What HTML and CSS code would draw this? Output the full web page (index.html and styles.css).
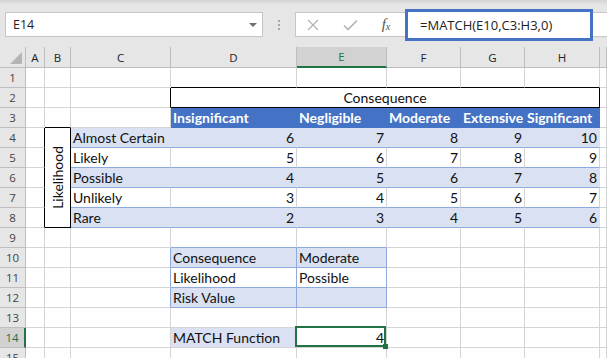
FILE: index.html
```html
<!DOCTYPE html>
<html lang="en">
<head>
    <meta charset="UTF-8">
    <meta name="viewport" content="width=device-width, initial-scale=1.0">
    <title>MATCH Function</title>
    <link rel="stylesheet" href="styles.css">
</head>
<body>
    <div class="toolbar">
        <div class="namebox">
            <span>E14</span>
            <span class="caret"></span>
        </div>
        <div class="grip"><i></i><i></i><i></i></div>
        <div class="formula">
            <span class="fb-icon fb-x">
                <svg width="12" height="12" viewBox="0 0 12 12"><path d="M1 1L11 11M11 1L1 11" stroke="#b3b3b3" stroke-width="1.3" fill="none"/></svg>
            </span>
            <span class="fb-icon fb-ok">
                <svg width="15" height="12" viewBox="0 0 15 12"><path d="M1 6.5L5 10.5L14 1.5" stroke="#b3b3b3" stroke-width="1.6" fill="none"/></svg>
            </span>
            <span class="fx">f<sub>x</sub></span>
            <div class="formula-text">=MATCH(E10,C3:H3,0)</div>
        </div>
    </div>

    <div class="sheet">
        <div class="corner"><span class="tri"></span></div>
        <div class="ch">A</div><div class="ch">B</div><div class="ch">C</div><div class="ch">D</div>
        <div class="ch sel">E</div><div class="ch">F</div><div class="ch">G</div><div class="ch">H</div><div class="ch"></div>

        <div class="rh">1</div>
        <div class="c"></div><div class="c"></div><div class="c"></div>
        <div class="c bk-b"></div><div class="c bk-b"></div><div class="c bk-b"></div><div class="c bk-b"></div><div class="c bk-b"></div><div class="c"></div>

        <div class="rh">2</div>
        <div class="c"></div><div class="c"></div><div class="c bk-r"></div>
        <div class="c box title">Consequence</div>
        <div class="c"></div>

        <div class="rh">3</div>
        <div class="c"></div><div class="c bk-b"></div><div class="c"></div>
        <div class="c hdr">Insignificant</div><div class="c hdr">Negligible</div><div class="c hdr">Moderate</div><div class="c hdr">Extensive</div><div class="c hdr">Significant</div>
        <div class="c"></div>

        <div class="rh">4</div>
        <div class="c bk-r"></div>
        <div class="c box side"><span>Likelihood</span></div>
        <div class="c band">Almost Certain</div>
        <div class="c band num">6</div><div class="c band num">7</div><div class="c band num">8</div><div class="c band num">9</div><div class="c band num">10</div>
        <div class="c"></div>

        <div class="rh">5</div>
        <div class="c bk-r"></div>
        <div class="c row">Likely</div>
        <div class="c row num">5</div><div class="c row num">6</div><div class="c row num">7</div><div class="c row num">8</div><div class="c row num">9</div>
        <div class="c"></div>

        <div class="rh">6</div>
        <div class="c bk-r"></div>
        <div class="c band">Possible</div>
        <div class="c band num">4</div><div class="c band num">5</div><div class="c band num">6</div><div class="c band num">7</div><div class="c band num">8</div>
        <div class="c"></div>

        <div class="rh">7</div>
        <div class="c bk-r"></div>
        <div class="c row">Unlikely</div>
        <div class="c row num">3</div><div class="c row num">4</div><div class="c row num">5</div><div class="c row num">6</div><div class="c row num">7</div>
        <div class="c"></div>

        <div class="rh">8</div>
        <div class="c bk-r"></div>
        <div class="c band">Rare</div>
        <div class="c band num">2</div><div class="c band num">3</div><div class="c band num">4</div><div class="c band num">5</div><div class="c band num">6</div>
        <div class="c"></div>

        <div class="rh">9</div>
        <div class="c"></div><div class="c"></div><div class="c"></div>
        <div class="c lb-b"></div><div class="c lb-b"></div><div class="c"></div><div class="c"></div><div class="c"></div><div class="c"></div>

        <div class="rh">10</div>
        <div class="c"></div><div class="c"></div><div class="c lb-r"></div>
        <div class="c tb band">Consequence</div><div class="c tb band">Moderate</div>
        <div class="c"></div><div class="c"></div><div class="c"></div><div class="c"></div>

        <div class="rh">11</div>
        <div class="c"></div><div class="c"></div><div class="c lb-r"></div>
        <div class="c tb">Likelihood</div><div class="c tb">Possible</div>
        <div class="c"></div><div class="c"></div><div class="c"></div><div class="c"></div>

        <div class="rh">12</div>
        <div class="c"></div><div class="c"></div><div class="c lb-r"></div>
        <div class="c tb band">Risk Value</div><div class="c tb band"></div>
        <div class="c"></div><div class="c"></div><div class="c"></div><div class="c"></div>

        <div class="rh">13</div>
        <div class="c"></div><div class="c"></div><div class="c"></div><div class="c"></div>
        <div class="c"></div><div class="c"></div><div class="c"></div><div class="c"></div><div class="c"></div>

        <div class="rh sel">14</div>
        <div class="c"></div><div class="c"></div><div class="c"></div>
        <div class="c fill">MATCH Function</div>
        <div class="c num active">4<span class="handle"></span></div>
        <div class="c"></div><div class="c"></div><div class="c"></div><div class="c"></div>

        <div class="rh">15</div>
        <div class="c"></div><div class="c"></div><div class="c"></div><div class="c"></div>
        <div class="c"></div><div class="c"></div><div class="c"></div><div class="c"></div><div class="c"></div>
    </div>
</body>
</html>
```

FILE: styles.css
```css
body {
    margin: 0;
    overflow: hidden;
    background: #fff;
    font-family: "Open Sans", "Noto Sans", sans-serif;
}

/* formula bar strip */
.toolbar {
    height: 47px;
    box-sizing: border-box;
    padding-top: 12px;
    display: flex;
    align-items: flex-start;
    background: linear-gradient(#d4d4d4, #e6e6e6 5px);
}
.namebox {
    margin-left: 5px;
    width: 258px;
    height: 25px;
    box-sizing: border-box;
    border: 1px solid #c6c6c6;
    background: #fff;
    display: flex;
    align-items: center;
    justify-content: space-between;
    padding: 0 5px 0 7px;
    font-size: 12.5px;
    color: #222;
}
.caret {
    width: 0;
    height: 0;
    border-left: 4px solid transparent;
    border-right: 4px solid transparent;
    border-top: 4px solid #6e6e6e;
}
.grip {
    width: 32px;
    height: 25px;
    display: flex;
    flex-direction: column;
    align-items: center;
    justify-content: center;
    gap: 2px;
}
.grip i {
    width: 2px;
    height: 2px;
    background: #a8a8a8;
}
.formula {
    flex: 1;
    height: 25px;
    box-sizing: border-box;
    border: 1px solid #c6c6c6;
    border-right: none;
    background: #fff;
    display: flex;
    align-items: center;
}
.fb-icon {
    display: flex;
    justify-content: center;
}
.fb-x {
    width: 33px;
}
.fb-ok {
    width: 42px;
}
.fx {
    width: 30px;
    text-align: center;
    font-family: "Liberation Serif", serif;
    font-style: italic;
    font-size: 15px;
    color: #555;
}
.fx sub {
    font-size: 10px;
    vertical-align: -1px;
}
.formula-text {
    align-self: center;
    margin-left: 4px;
    width: 188px;
    height: 32px;
    box-sizing: border-box;
    border: 3px solid #4472c4;
    background: #fff;
    padding-left: 12px;
    display: flex;
    align-items: center;
    font-size: 13px;
    color: #222;
}

/* grid */
.sheet {
    display: grid;
    grid-template-columns: 26px 19px 26px 100px 126px 90px 74px 64px 75px 1fr;
    grid-template-rows: 21px repeat(15, 20px);
    font-family: Lato, "Open Sans", sans-serif;
    font-size: 14px;
    color: #111;
}
.corner, .ch, .rh {
    background: #e6e6e6;
    box-sizing: border-box;
    border-right: 1px solid #bdbdbd;
    border-bottom: 1px solid #bdbdbd;
    font-family: "Open Sans", sans-serif;
    font-size: 11.5px;
    color: #222;
    display: flex;
    align-items: center;
    justify-content: center;
}
.corner {
    position: relative;
}
.tri {
    position: absolute;
    right: 3px;
    bottom: 3px;
    width: 0;
    height: 0;
    border-left: 12px solid transparent;
    border-bottom: 12px solid #b5b5b5;
}
.ch.sel {
    background: #d2d2d2;
    border-bottom: 2px solid #217346;
    color: #217346;
}
.rh {
    color: #444;
}
.rh.sel {
    background: #d2d2d2;
    border-right: 2px solid #217346;
    color: #217346;
}
.c {
    box-sizing: border-box;
    border-right: 1px solid #d4d4d4;
    border-bottom: 1px solid #d4d4d4;
    padding: 0 2px;
    line-height: 19px;
    white-space: nowrap;
    display: flex;
}
.num {
    justify-content: flex-end;
}
.bk-b {
    border-bottom-color: #000;
}
.bk-r {
    border-right-color: #000;
}
.box {
    border-right-color: #000;
    border-bottom-color: #000;
}
.title {
    grid-column: span 5;
    justify-content: center;
}
.side {
    grid-row: span 5;
    align-items: center;
    justify-content: center;
}
.side span {
    writing-mode: vertical-rl;
    transform: rotate(180deg);
    line-height: 20px;
}
.hdr {
    background: #4472c4;
    border-right-color: #4472c4;
    border-bottom-color: #4472c4;
    color: #fff;
    font-weight: bold;
}
.band {
    background: #d9e1f2;
    border-right-color: #d9e1f2;
    border-bottom-color: #8ea9db;
}
.row {
    border-bottom-color: #8ea9db;
}
.lb-b {
    border-bottom-color: #8ea9db;
}
.lb-r {
    border-right-color: #8ea9db;
}
.tb {
    border-right-color: #8ea9db;
    border-bottom-color: #8ea9db;
}
.fill {
    background: #d9e1f2;
}
.active {
    position: relative;
}
.active::before {
    content: "";
    position: absolute;
    top: -2px;
    left: -2px;
    right: 0;
    bottom: 0;
    border: 2px solid #217346;
}
.handle {
    position: absolute;
    right: -2px;
    bottom: -2px;
    width: 5px;
    height: 5px;
    background: #217346;
}
```
